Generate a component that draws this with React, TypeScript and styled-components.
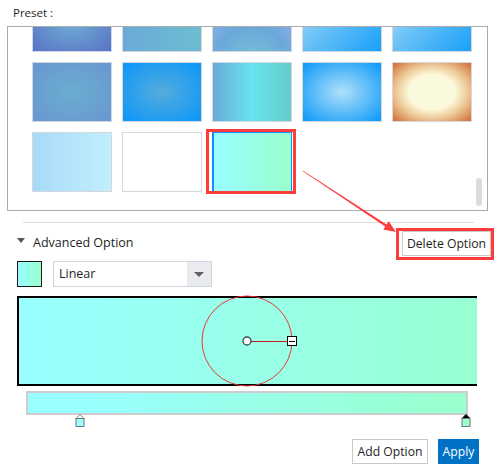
import React from "react";
import styled, { createGlobalStyle } from "styled-components";

const Global = createGlobalStyle`
  html, body { margin: 0; padding: 0; background: #fff; }
  body { font-family: "Open Sans", "Noto Sans", sans-serif; color: #1e1e1e; }
`;

const Page = styled.div`
  position: relative;
  width: 496px;
  height: 469px;
  overflow: hidden;
  background: #fff;
`;

const PresetLabel = styled.div`
  height: 26px;
  padding-left: 13px;
  box-sizing: border-box;
  padding-top: 5px;
  font-size: 11.5px;
  line-height: 15px;
`;

const PresetBox = styled.div`
  position: relative;
  margin-left: 7px;
  width: 481px;
  height: 185px;
  box-sizing: border-box;
  border: 1px solid #ababab;
  overflow: hidden;
`;

const TileGrid = styled.div`
  margin-top: -35px;
  padding-left: 24px;
  display: grid;
  grid-template-columns: repeat(5, 80px);
  grid-auto-rows: 60px;
  gap: 10px;
`;

const Tile = styled.div<{ $bg: string; $selected?: boolean }>`
  position: relative;
  box-sizing: border-box;
  border: 1px solid ${(p) => (p.$selected ? "#1a8cff" : "#d3d7de")};
  border-left-width: ${(p) => (p.$selected ? "2px" : "1px")};
  background: ${(p) => p.$bg};
`;

const Highlight = styled.div`
  position: absolute;
  top: -4px;
  left: -8px;
  right: -5px;
  bottom: -3px;
  border: 3px solid #ff3c3c;
  pointer-events: none;
`;

const ScrollThumb = styled.div`
  position: absolute;
  right: 5px;
  bottom: 4px;
  width: 6px;
  height: 28px;
  border-radius: 3px;
  background: #dcdcdc;
`;

const Separator = styled.div`
  margin: 11px 0 0 23px;
  width: 451px;
  height: 1px;
  background: #dcdcdc;
`;

const HeaderRow = styled.div`
  display: flex;
  justify-content: space-between;
  align-items: center;
  padding: 5px 2px 0 17px;
`;

const Toggle = styled.div`
  display: flex;
  align-items: center;
  gap: 8px;
  margin-bottom: 4px;
  font-size: 12.5px;
  line-height: 17px;
`;

const Caret = styled.span`
  width: 0;
  height: 0;
  border-left: 4.5px solid transparent;
  border-right: 4.5px solid transparent;
  border-top: 5px solid #555;
  margin-top: -4px;
`;

const AnnotationBox = styled.div`
  display: flex;
  border: 3px solid #ff3c3c;
  padding: 0 0 1px 3px;
`;

const Button = styled.button<{ $primary?: boolean; $width: number }>`
  height: 25px;
  width: ${(p) => p.$width}px;
  box-sizing: border-box;
  padding: 0;
  text-align: center;
  white-space: nowrap;
  font-family: inherit;
  font-size: 12.2px;
  line-height: 23px;
  border: 1px solid ${(p) => (p.$primary ? "#0072c6" : "#c9c9c9")};
  background: ${(p) => (p.$primary ? "#0072c6" : "#fff")};
  color: ${(p) => (p.$primary ? "#fff" : "#1e1e1e")};
  border-radius: 0;
  cursor: pointer;
`;

const TypeRow = styled.div`
  display: flex;
  gap: 11px;
  padding-left: 17px;
  margin-top: 1px;
`;

const Swatch = styled.div`
  width: 25px;
  height: 26px;
  box-sizing: border-box;
  border: 1px solid #1a1a1a;
  background: linear-gradient(90deg, #99ffff, #99ffcc);
`;

const Select = styled.div`
  display: flex;
  width: 159px;
  height: 26px;
  box-sizing: border-box;
  border: 1px solid #cfd5de;
  background: #fff;
`;

const SelectValue = styled.div`
  flex: 1;
  padding-left: 5px;
  font-size: 12.5px;
  line-height: 24px;
`;

const SelectArrow = styled.div`
  width: 24px;
  background: #e9ebef;
  display: flex;
  align-items: center;
  justify-content: center;
  &::after {
    content: "";
    border-left: 5px solid transparent;
    border-right: 5px solid transparent;
    border-top: 5px solid #606060;
  }
`;

const Preview = styled.div`
  margin: 9px 0 0 17px;
  width: 460px;
  height: 90px;
  box-sizing: border-box;
  border: 2px solid #000;
  border-right: none;
  background: linear-gradient(90deg, #99ffff 0%, #99ffd2 100%);
`;

const PreviewCanvas = styled.svg`
  display: block;
  width: 458px;
  height: 86px;
  overflow: visible;
`;

const GradientBar = styled.div`
  margin: 5px 0 0 26px;
  width: 442px;
  height: 24px;
  box-sizing: border-box;
  border: 2px solid #cdcdcd;
  background: linear-gradient(90deg, #99ffff 12%, #99ffcc 100%);
`;

const StopTrack = styled.div`
  position: relative;
  margin: -1px 0 0 28px;
  width: 438px;
  height: 13px;
`;

const StopMarker = styled.svg`
  position: absolute;
  top: 0;
  width: 10px;
  height: 13px;
  transform: translateX(-50%);
  overflow: visible;
`;

const ButtonRow = styled.div`
  display: flex;
  justify-content: flex-end;
  gap: 10px;
  padding-right: 17px;
  margin-top: 12px;
`;

const ArrowLayer = styled.svg`
  position: absolute;
  top: 0;
  left: 0;
  width: 496px;
  height: 469px;
  pointer-events: none;
`;

const tiles: string[] = [
  "radial-gradient(ellipse at center, #6faed4 0%, #5a72c6 100%)",
  "linear-gradient(90deg, #6aaad8, #6cbed0)",
  "radial-gradient(circle at 50% 120%, #78c4d8 0%, #6aa8da 45%, #b4b6f8 100%)",
  "linear-gradient(135deg, #b2e2fa 0%, #6cc2f6 40%, #19a0fa 100%)",
  "linear-gradient(135deg, #b2e2fa 0%, #6cc2f6 40%, #19a0fa 100%)",
  "radial-gradient(ellipse at center, #6aaed0 0%, #6a96d0 100%)",
  "radial-gradient(ellipse at center, #55acdc 0%, #0a96fa 100%)",
  "linear-gradient(90deg, #6aaad8 0%, #66e4ee 50%, #66cccc 100%)",
  "radial-gradient(ellipse at center, #b0e0f8 0%, #0a98fa 100%)",
  "radial-gradient(ellipse at center, #fbf9dc 0%, #fbf9dc 42%, #f0d0a0 62%, #d06c30 100%)",
  "linear-gradient(90deg, #a8d9f8, #c2effd)",
  "#ffffff",
  "linear-gradient(90deg, #99ffff, #99ffcc)",
];

const stops = [
  { pos: 11.8, color: "#99ffff", active: false },
  { pos: 100, color: "#99ffcc", active: true },
];

export default function App() {
  return (
    <Page>
      <Global />
      <PresetLabel>Preset :</PresetLabel>
      <PresetBox>
        <TileGrid>
          {tiles.map((bg, i) => (
            <Tile key={i} $bg={bg} $selected={i === tiles.length - 1}>
              {i === tiles.length - 1 && <Highlight />}
            </Tile>
          ))}
        </TileGrid>
        <ScrollThumb />
      </PresetBox>
      <Separator />
      <HeaderRow>
        <Toggle>
          <Caret />
          Advanced Option
        </Toggle>
        <AnnotationBox>
          <Button $width={89}>Delete Option</Button>
        </AnnotationBox>
      </HeaderRow>
      <TypeRow>
        <Swatch />
        <Select>
          <SelectValue>Linear</SelectValue>
          <SelectArrow />
        </Select>
      </TypeRow>
      <Preview>
        <PreviewCanvas viewBox="0 0 458 86">
          <circle cx="228" cy="43" r="45" fill="none" stroke="#e8383a" strokeWidth="1" />
          <line x1="228" y1="43.5" x2="270" y2="43.5" stroke="#c0201e" strokeWidth="1" />
          <circle cx="228" cy="43" r="4" fill="#fff" stroke="#3a4a48" strokeWidth="1.3" />
          <rect x="268.5" y="38.5" width="9" height="9" fill="#fff" stroke="#000" strokeWidth="1" />
          <line x1="270" y1="43.5" x2="276" y2="43.5" stroke="#000" strokeWidth="1" />
        </PreviewCanvas>
      </Preview>
      <GradientBar />
      <StopTrack>
        {stops.map((s, i) => (
          <StopMarker key={i} viewBox="0 0 10 13" style={{ left: `${s.pos}%` }}>
            <polygon
              points="5,0.5 9,4.5 1,4.5"
              fill={s.active ? "#000" : "#fff"}
              stroke={s.active ? "#000" : "#777"}
              strokeWidth="1"
            />
            <rect x="1" y="4.5" width="8" height="8" fill={s.color} stroke="#777" strokeWidth="1" />
          </StopMarker>
        ))}
      </StopTrack>
      <ButtonRow>
        <Button $width={76}>Add Option</Button>
        <Button $primary $width={41}>Apply</Button>
      </ButtonRow>
      <ArrowLayer viewBox="0 0 496 469">
        <polygon
          points="302.8,171.3 385.2,226.4 383.2,229.6 396,232 388.7,221.2 386.6,224.4 303.2,170.7"
          fill="#ff3c3c"
        />
      </ArrowLayer>
    </Page>
  );
}
